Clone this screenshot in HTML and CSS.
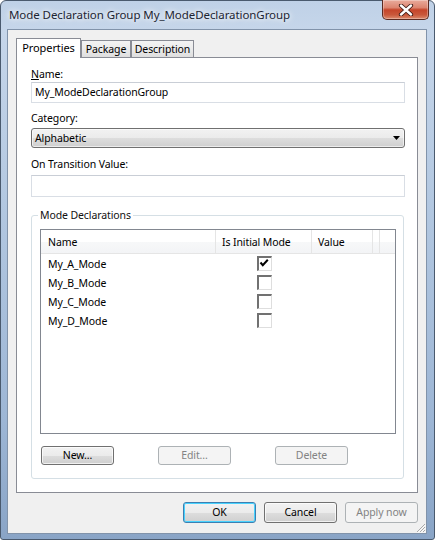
FILE: index.html
```html
<!DOCTYPE html>
<html>
<head>
<meta charset="utf-8">
<title>Mode Declaration Group</title>
<link rel="stylesheet" href="styles.css">
</head>
<body>
<div class="window">
  <div class="titlebar">
    <span class="title">Mode Declaration Group My_ModeDeclarationGroup</span>
    <div class="close">
      <svg width="16" height="12" viewBox="0 0 16 12">
        <path d="M3 1.5 L13 10.5 M13 1.5 L3 10.5" stroke="#3d1a14" stroke-width="4.2" stroke-linecap="round" fill="none"/>
        <path d="M3 1.5 L13 10.5 M13 1.5 L3 10.5" stroke="#ffffff" stroke-width="2.4" stroke-linecap="round" fill="none"/>
      </svg>
    </div>
  </div>
  <div class="client">
    <div class="tabs">
      <div class="tab active tab-props">Properties</div>
      <div class="tab tab-pkg">Package</div>
      <div class="tab tab-desc">Description</div>
    </div>
    <div class="panel">
      <div class="lbl"><u>N</u>ame:</div>
      <div class="textbox">My_ModeDeclarationGroup</div>
      <div class="lbl lbl-gap">Category:</div>
      <div class="combo">
        <span>Alphabetic</span>
        <svg class="arrow" width="7" height="4" viewBox="0 0 7 4"><path d="M0 0 H7 L3.5 4 Z" fill="#000"/></svg>
      </div>
      <div class="lbl lbl-gap2">On Transition Value:</div>
      <div class="textbox tall"></div>
      <fieldset class="group">
        <legend>Mode Declarations</legend>
        <div class="list">
          <div class="lv-head">
            <div class="hc c1">Name</div>
            <div class="hc c2">Is Initial Mode</div>
            <div class="hc c3">Value</div>
            <div class="hc c4"></div>
          </div>
          <div class="lv-body">
            <div class="row"><div class="cell c1">My_A_Mode</div><div class="cell c2"><span class="cb"><svg width="13" height="13" viewBox="0 0 13 13"><path d="M2.5 5.5 L4.8 8.2 L9.8 2.8" stroke="#000" stroke-width="2" fill="none"/></svg></span></div><div class="cell c3"></div></div>
            <div class="row"><div class="cell c1">My_B_Mode</div><div class="cell c2"><span class="cb"></span></div><div class="cell c3"></div></div>
            <div class="row"><div class="cell c1">My_C_Mode</div><div class="cell c2"><span class="cb"></span></div><div class="cell c3"></div></div>
            <div class="row"><div class="cell c1">My_D_Mode</div><div class="cell c2"><span class="cb"></span></div><div class="cell c3"></div></div>
          </div>
        </div>
        <div class="group-buttons">
          <div class="btn">New...</div>
          <div class="btn disabled">Edit...</div>
          <div class="btn disabled">Delete</div>
        </div>
      </fieldset>
    </div>
    <div class="dialog-buttons">
      <div class="btn default">OK</div>
      <div class="btn">Cancel</div>
      <div class="btn disabled">Apply now</div>
    </div>
    <svg class="grip" width="10" height="10" viewBox="0 0 10 10">
      <path d="M9 1 L1 9 M9 4 L4 9 M9 7 L7 9" stroke="#a9a9a9" stroke-width="1" fill="none"/>
      <path d="M9.8 1.8 L1.8 9.8 M9.8 4.8 L4.8 9.8 M9.8 7.8 L7.8 9.8" stroke="#ffffff" stroke-width="1" fill="none"/>
    </svg>
  </div>
</div>
</body>
</html>
```
FILE: styles.css
```css
* { box-sizing: border-box; }
html, body { margin: 0; padding: 0; }
body {
  width: 435px;
  height: 540px;
  overflow: hidden;
  background: #ffffff;
  font-family: "Noto Sans", "Open Sans", sans-serif;
  font-size: 10.5px;
  letter-spacing: -0.1px;
  color: #000;
}
.window {
  width: 435px;
  height: 540px;
  display: flex;
  flex-direction: column;
  border: 1px solid #4a5a6e;
  border-radius: 6px 6px 3px 3px;
  background: linear-gradient(to bottom, #bfd1e7 0px, #c6d6ea 30px, #b3c8e1 200px, #9db6d5 420px, #89a4c6 540px);
}
.titlebar {
  height: 28px;
  flex: none;
  display: flex;
  align-items: flex-start;
  padding-left: 8px;
}
.title {
  margin-top: 6px;
  line-height: 16px;
  font-size: 11.5px;
  letter-spacing: -0.07px;
  color: #1d2533;
  text-shadow: 0 0 5px #ffffff, 0 0 8px rgba(255,255,255,0.8);
}
.close {
  margin-left: auto;
  margin-right: 5px;
  margin-top: -1px;
  width: 47px;
  height: 20px;
  border: 1px solid #5b2b22;
  border-top: none;
  border-radius: 0 0 5px 5px;
  background: linear-gradient(to bottom, #e9ab9c 0%, #dc8570 40%, #c5452a 52%, #c9583b 78%, #dc8c6e 100%);
  box-shadow: inset 0 0 0 1px rgba(255,255,255,0.3);
  display: flex;
  align-items: center;
  justify-content: center;
}
.client {
  flex: 1;
  margin: 0 7px 5px 6px;
  border: 1px solid #8193aa;
  background: #f0f0f0;
  padding: 8px 8px 10px 8px;
  display: flex;
  flex-direction: column;
  position: relative;
}
.tabs {
  height: 19px;
  flex: none;
  display: flex;
  align-items: flex-end;
  position: relative;
  z-index: 1;
}
.tab {
  height: 17px;
  line-height: 16px;
  text-align: center;
  border: 1px solid #898c95;
  border-bottom: none;
  background: linear-gradient(to bottom, #f3f3f3 0%, #ebebeb 50%, #dedede 100%);
}
.tab.active {
  height: 20px;
  margin-bottom: -1px;
  line-height: 17px;
  background: #ffffff;
  font-size: 11px;
}
.tab-props { width: 65px; }
.tab-pkg { width: 50px; }
.tab-desc { width: 63px; }
.panel {
  flex: 1;
  border: 1px solid #898c95;
  background: #ffffff;
  padding: 9px 12px 0 14px;
  display: flex;
  flex-direction: column;
}
.lbl {
  height: 15px;
  line-height: 15px;
}
.lbl-gap { margin-top: 8px; margin-bottom: 2px; }
.lbl-gap2 { margin-top: 9px; margin-bottom: 3px; }
.textbox {
  height: 21px;
  line-height: 19px;
  padding-left: 3px;
  border: 1px solid #d9dee5;
  border-top-color: #c9ced6;
  background: #fff;
}
.textbox.tall { height: 22px; }
.combo {
  height: 20px;
  display: flex;
  align-items: center;
  justify-content: space-between;
  padding: 0 4px 0 3px;
  border: 1px solid #707070;
  border-radius: 3px;
  background: linear-gradient(to bottom, #f2f2f2 0%, #ebebeb 50%, #dddddd 51%, #cfcfcf 100%);
  box-shadow: inset 0 0 0 1px rgba(255,255,255,0.6);
}
.group {
  margin: 11px 1px 0 0;
  padding: 0 7px 13px 8px;
  border: 1px solid #d5dfe5;
  border-radius: 3px;
  min-width: 0;
}
.group legend {
  padding: 0 2px;
  margin-left: -2px;
  line-height: 15px;
  color: #111;
}
.list {
  margin-top: 6px;
  height: 205px;
  border: 1px solid #828790;
  background: #fff;
}
.lv-head {
  height: 24px;
  display: flex;
  border-bottom: 1px solid #e5e5e5;
  background: linear-gradient(to bottom, #ffffff 0%, #ffffff 50%, #f7f8f9 51%, #f3f4f6 100%);
}
.hc {
  line-height: 15px;
  padding: 5px 0 0 6px;
  border-right: 1px solid #e5e5e5;
}
.c1 { width: 175px; padding-left: 7px; }
.c2 { width: 96px; }
.c3 { width: 61px; }
.hc.c4 { width: 3px; border-right: 1px solid #e5e5e5; }
.lv-body { padding-top: 1px; }
.row {
  height: 19px;
  display: flex;
}
.cell {
  line-height: 19px;
}
.cell.c2 {
  display: flex;
  justify-content: center;
  align-items: flex-start;
  padding-top: 1px;
  padding-left: 1px;
}
.cb {
  width: 15px;
  height: 15px;
  border-top: 2px solid #717171;
  border-left: 2px solid #717171;
  border-right: 1px solid #dedede;
  border-bottom: 1px solid #dedede;
  background: #fff;
  display: flex;
  align-items: center;
  justify-content: center;
}
.cb svg { display: block; margin: -1px 0 0 -1px; }
.group-buttons {
  margin-top: 12px;
  padding-left: 1px;
  display: flex;
  gap: 44px;
}
.btn {
  width: 73px;
  height: 19px;
  line-height: 17px;
  text-align: center;
  border: 1px solid #707070;
  border-radius: 3px;
  background: linear-gradient(to bottom, #f2f2f2 0%, #ebebeb 50%, #dddddd 51%, #cfcfcf 100%);
  box-shadow: inset 0 0 0 1px rgba(255,255,255,0.7);
}
.btn.disabled {
  border-color: #adb2b5;
  background: #f4f4f4;
  color: #838383;
  box-shadow: none;
}
.dialog-buttons {
  margin-top: 9px;
  height: 21px;
  display: flex;
  justify-content: flex-end;
  gap: 8px;
  flex: none;
}
.dialog-buttons .btn { height: 21px; line-height: 19px; }
.btn.default {
  border-color: #3c7fb1;
  box-shadow: inset 0 0 0 1px #48d2fe;
}
.grip {
  position: absolute;
  right: 0;
  bottom: 0;
}
```
